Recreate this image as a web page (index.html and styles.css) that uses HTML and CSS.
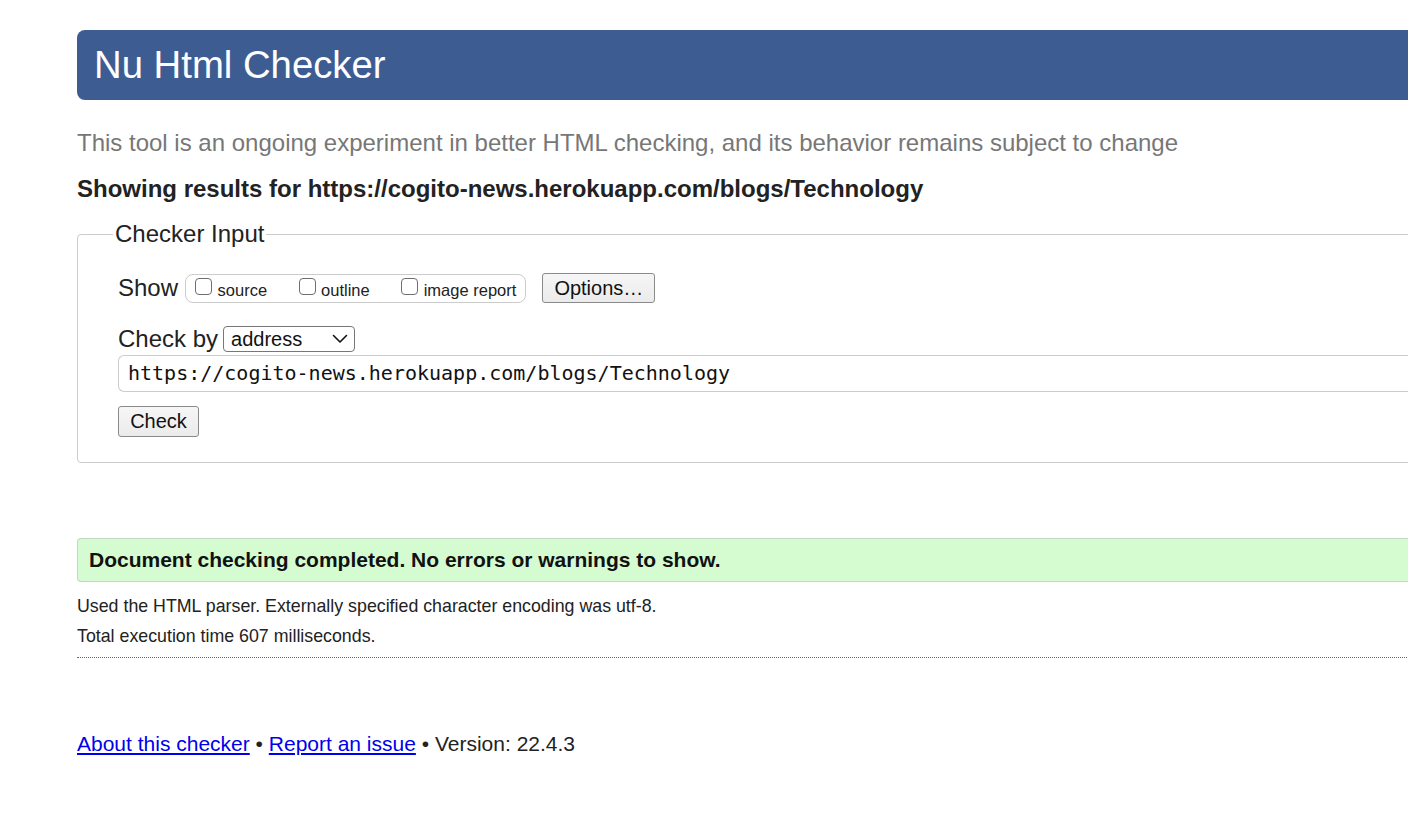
FILE: index.html
```html
<!DOCTYPE html>
<html lang="en">
<head>
<meta charset="utf-8">
<title>Nu Html Checker</title>
<link rel="stylesheet" href="styles.css">
</head>
<body>
<div class="page">
  <h1 class="masthead">Nu Html Checker</h1>
  <p class="intro">This tool is an ongoing experiment in better HTML checking, and its behavior remains subject to change</p>
  <p class="showing">Showing results for https://cogito-news.herokuapp.com/blogs/Technology</p>
  <form class="form">
    <fieldset class="checker">
      <legend class="legend">Checker Input</legend>
      <div class="row show-row">
        <span class="label">Show</span>
        <span class="group">
          <label class="opt"><input type="checkbox" class="cb"><span>source</span></label>
          <label class="opt"><input type="checkbox" class="cb"><span>outline</span></label>
          <label class="opt"><input type="checkbox" class="cb"><span>image report</span></label>
        </span>
        <button type="button" class="btn options">Options…</button>
      </div>
      <div class="row by-row">
        <span class="label">Check by</span>
        <span class="select">address
          <svg class="chev" width="16" height="10" viewBox="0 0 16 10"><path d="M1.5 1.5 L8 8 L14.5 1.5" fill="none" stroke="#111" stroke-width="1.6" stroke-linecap="round" stroke-linejoin="round"/></svg>
        </span>
      </div>
      <div class="url">https://cogito-news.herokuapp.com/blogs/Technology</div>
      <button type="button" class="btn check">Check</button>
    </fieldset>
  </form>
  <div class="success">Document checking completed. No errors or warnings to show.</div>
  <p class="details">Used the HTML parser. Externally specified character encoding was utf-8.</p>
  <p class="details">Total execution time 607 milliseconds.</p>
  <hr class="sep">
  <p class="footer"><a href="#">About this checker</a> • <a href="#">Report an issue</a> • Version: 22.4.3</p>
</div>
</body>
</html>
```
FILE: styles.css
```css
html, body {
  margin: 0;
  padding: 0;
  background: #fff;
  overflow: hidden;
}
body {
  font-family: "Liberation Sans", Arial, Helvetica, sans-serif;
  color: #222;
}
.page {
  padding: 30px 0 0 77px;
  width: 1500px;
}
.masthead {
  margin: 0;
  height: 70px;
  line-height: 70px;
  padding-left: 17px;
  background: #3d5d92;
  color: #fff;
  font-weight: normal;
  font-size: 38.3px;
  border-radius: 8px 0 0 8px;
}
.intro {
  margin: 30px 0 0;
  font-size: 24px;
  line-height: 26px;
  color: #777;
}
.showing {
  margin: 20px 0 0;
  font-size: 24px;
  line-height: 26px;
  font-weight: bold;
  color: #222;
}
.form {
  margin: 19px 0 0;
}
.checker {
  margin: 0;
  border: 1px solid #ccc;
  border-radius: 4px;
  padding: 26px 0 25px 40px;
  min-width: 0;
}
.legend {
  font-size: 24px;
  line-height: 26px;
  padding: 0 2px;
  margin-left: -5px;
  color: #222;
}
.row {
  display: flex;
  align-items: center;
}
.label {
  font-size: 24px;
  color: #222;
}
.show-row {
  height: 30px;
}
.group {
  display: flex;
  align-items: center;
  margin-left: 7px;
  height: 27px;
  border: 1px solid #ccc;
  border-radius: 8px;
  padding: 0 9px 0 9px;
}
.opt {
  display: flex;
  align-items: center;
  font-size: 16.5px;
  color: #222;
  margin-right: 31.5px;
}
.opt:last-child {
  margin-right: 0;
}
.opt span {
  margin-left: 5.5px;
  padding-top: 4px;
}
.cb {
  appearance: none;
  -webkit-appearance: none;
  margin: 0;
  width: 17px;
  height: 17px;
  border: 1px solid #6f6f6f;
  border-radius: 4px;
  background: #fff;
  position: relative;
  top: -2px;
}
.btn {
  font-family: "Liberation Sans", Arial, Helvetica, sans-serif;
  font-size: 20px;
  color: #111;
  background: linear-gradient(#f6f6f6, #ebebeb);
  border: 1px solid #8a8a8a;
  border-radius: 3px;
  padding: 0;
}
.options {
  margin-left: 16px;
  width: 113px;
  height: 30px;
}
.by-row {
  margin-top: 22px;
  height: 28px;
}
.select {
  margin-left: 5px;
  display: flex;
  align-items: center;
  justify-content: space-between;
  box-sizing: border-box;
  width: 132px;
  height: 26px;
  border: 1px solid #777;
  border-radius: 4px;
  padding: 0 6px 0 7px;
  font-size: 20px;
  color: #111;
}
.url {
  margin-top: 2px;
  height: 35px;
  line-height: 35px;
  border: 1px solid #ccc;
  border-right: none;
  border-radius: 6px 0 0 6px;
  padding-left: 9px;
  font-family: "DejaVu Sans Mono", "Liberation Mono", monospace;
  font-size: 20px;
  color: #111;
}
.check {
  display: block;
  margin-top: 14px;
  width: 81px;
  height: 31px;
}
.success {
  margin-top: 75px;
  height: 42px;
  line-height: 42px;
  background: #d5fbd0;
  border: 1px solid #c5d6c2;
  border-right: none;
  border-radius: 4px 0 0 4px;
  padding-left: 11px;
  font-size: 21px;
  font-weight: bold;
  color: #111;
}
.details {
  margin: 0;
  font-size: 17.8px;
  line-height: 20px;
  color: #222;
}
.success + .details {
  margin-top: 14px;
}
.details + .details {
  margin-top: 10px;
}
.sep {
  margin: 11px 0 0;
  border: none;
  border-top: 1px dotted #666;
  height: 0;
}
.footer {
  margin: 74px 0 0;
  font-size: 21px;
  line-height: 24px;
  color: #222;
}
.footer a {
  color: #0000ee;
}
```
